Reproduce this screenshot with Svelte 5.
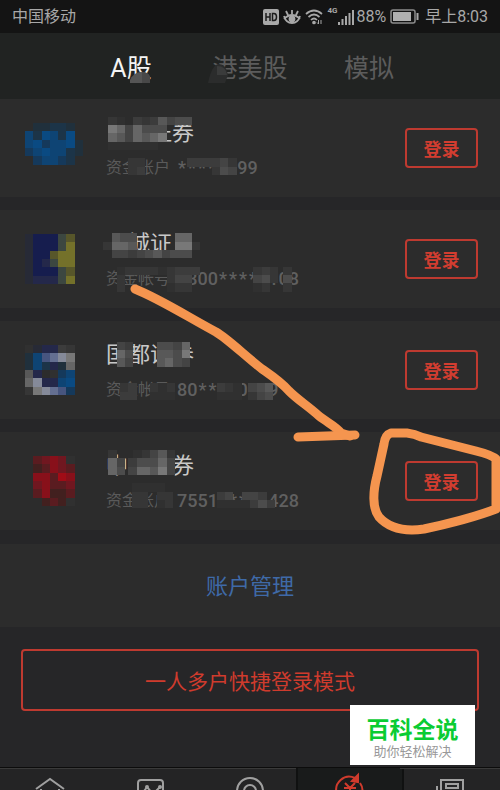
<script lang="ts">
  type Patch = { x: number; y: number; rows: string[] };

  const tabs = ['A股', '港美股', '模拟'];
  let activeTab = 'A股';

  // оттенки мозаики
  const shades: Record<string, string> = {
    a: '#303030',
    b: '#363636',
    c: '#3c3c3c',
    d: '#444444',
    e: '#4c4c4c',
    f: '#585858',
    g: '#666666',
    h: '#787878',
    1: '#20303c',
    2: '#1c3448',
    3: '#15395b',
    4: '#0e4474',
    5: '#0a4a82',
    n: '#161d4e',
    m: '#24284a',
    k: '#272a36',
    t: '#3c4740',
    y: '#74712a',
    o: '#57562a',
    p: '#39392e',
    l: '#47557f',
    v: '#646f91',
    w: '#858a99',
    r: '#88101a',
    s: '#701720',
    u: '#5a1c20',
    x: '#42201f',
    z: '#a00c16',
  };

  const accounts = [
    {
      name: '　　证券',
      label: '资金账户',
      head: '',
      stars: 5,
      tail: '699',
      logo: ['.11221.', '425425.', '4534451', '3454421', '.34432.', '.......'],
    },
    {
      name: '　城证　',
      label: '资金帐号',
      head: '0800',
      stars: 4,
      tail: '0108',
      logo: ['knnnto.', 'knnnty.', 'knnoyy.', 'knmtyy.', 'knnnto.', 'kmmmty.'],
    },
    {
      name: '国都证券',
      label: '资金帐号',
      head: '80',
      stars: 4,
      tail: '0009',
      logo: ['akmmcb.', '14lvwh.', '142m1g.', 'fm.a34.', 'gwmm45.', 'bhwvl3.'],
    },
    {
      name: '中　　券',
      label: '资金账户',
      head: '7551',
      stars: 4,
      tail: '4428',
      logo: ['.usrsa.', '.xursu.', '.rruzr.', '.sruus.', '.urxxu.', '..xuxa.'],
    },
  ];

  const patches: Patch[] = [
    { x: 13, y: 14, rows: ['ba.cbcfdee', 'hgdgeee', 'gfdgfgh', 'aaaaaa'] },
    { x: 15.4, y: 19, rows: ['bb', 'bc'] },
    { x: 22.4, y: 19, rows: ['ccccdb', '...bed'] },
    { x: 12.4, y: 28, rows: ['.fee', 'bggf', '.ddcdefdee'] },
    { x: 21, y: 28, rows: ['gg', 'hhb', 'ee'] },
    { x: 14, y: 32, rows: ['abbbba', 'b', 'b'] },
    { x: 20, y: 32, rows: ['bccc', 'bdd', 'abb'] },
    { x: 30.4, y: 32, rows: ['bcb', 'deb', 'ab'] },
    { x: 34, y: 32, rows: ['b', 'e', 'b'] },
    { x: 14, y: 41, rows: ['dc', 'ge', 'fd'] },
    { x: 18.8, y: 41, rows: ['eedg', 'ffeh', 'fged'] },
    { x: 14.4, y: 46, rows: ['bc', 'cc'] },
    { x: 18, y: 46, rows: ['bab', 'aaa'] },
    { x: 26, y: 46, rows: ['cba', 'aaa'] },
    { x: 29.8, y: 46, rows: ['def', 'bde'] },
    { x: 13, y: 54, rows: ['b..abdfb', 'gd.eeegd', 'ge.ggfhd'] },
    { x: 15.4, y: 55, rows: ['c', 'd'] },
    { x: 15.8, y: 58, rows: ['aaaa', 'bb', 'bb'] },
    { x: 18.8, y: 59, rows: ['bb', 'ab'] },
    { x: 26, y: 59, rows: ['cd.ddc', 'aaaacec'] },
  ];
</script>

<div class="screen">
  <header class="status">
    <span>中国移动</span>
    <div class="status-right">
      <svg width="16" height="16" viewBox="0 0 16 16">
        <rect width="16" height="16" rx="2" fill="#a8a8a8" />
        <path d="M3 4V12M7 4V12M3 8H7M9.5 4.5V11.5H11Q13.5 11.5 13.5 8T11 4.5Z" fill="none" stroke="#1c1c1c" stroke-width="1.5" />
      </svg>
      <svg class="eye" width="18" height="16" viewBox="0 0 18 16" fill="none" stroke="#a8a8a8" stroke-width="1.8">
        <path d="M1 7Q3 14 9 14Q15 14 17 7M1 10Q5 6 9 6Q13 6 17 10M9 5V1M5 6L3 2M13 6L15 2" />
        <circle cx="9" cy="10" r="2.5" fill="#a8a8a8" />
      </svg>
      <svg class="wifi" width="18" height="16" viewBox="0 0 18 16" fill="none" stroke="#a8a8a8" stroke-width="1.7">
        <path d="M1 5Q9 -2 17 5M3.5 8Q9 3 14.5 8M6 11Q9 8 12 11" />
        <circle cx="9" cy="13.5" r="1" fill="#a8a8a8" />
        <path d="M13.5 11V15M12 13.5L13.5 15M16 15V11" stroke-width="1" />
      </svg>
      <span class="net">4G</span>
      <svg width="17" height="16" viewBox="0 0 17 16" stroke="#a8a8a8" stroke-width="2">
        <path d="M2 13V16M5.5 10V16M9 7V16M12.5 4V16M16 1V16" />
      </svg>
      <span class="percent">88%</span>
      <svg class="battery" width="29" height="15" viewBox="0 0 29 15">
        <rect x="1" y="1" width="24" height="13" rx="2" fill="none" stroke="#8c8c8c" stroke-width="1.5" />
        <rect x="3" y="3" width="18" height="9" fill="#b0b0b0" />
        <path d="M27.5 4V11" stroke="#a8a8a8" stroke-width="2" />
      </svg>
      <span>早上8:03</span>
    </div>
  </header>

  <nav class="tabs">
    {#each tabs as tab}
      <button class="tab" class:active={tab === activeTab} on:click={() => (activeTab = tab)}>{tab}</button>
    {/each}
  </nav>

  <main>
    <div class="accounts">
      {#each accounts as account}
        <section class="card">
          <svg class="logo" width="58" height="50" viewBox="0 0 7 6" shape-rendering="crispEdges">
            {#each account.logo as row, y}
              {#each row as cell, x}
                {#if cell !== '.'}
                  <rect {x} {y} width="1" height="1" fill={shades[cell]} />
                {/if}
              {/each}
            {/each}
          </svg>
          <div class="info">
            <h2>{account.name}</h2>
            <p>
              <span>{account.label}</span>
              <span class="number">
                {account.head}{#each Array(account.stars) as _}<span class="star">*</span>{/each}{account.tail}
              </span>
            </p>
          </div>
          <button class="login">登录</button>
        </section>
      {/each}
    </div>

    <a class="manage" href="#manage">账户管理</a>

    <div class="quick">
      <button>一人多户快捷登录模式</button>
    </div>
  </main>

  <nav class="bottom">
    <a href="#home" aria-label="首页">
      <svg width="32" height="32" viewBox="0 0 32 32">
        <path d="M2 12L16 2L30 12M7 12V28H25V12" />
      </svg>
    </a>
    <a href="#market" aria-label="行情">
      <svg width="32" height="32" viewBox="0 0 32 32">
        <rect x="4" y="3" width="25" height="25" rx="3" />
        <path d="M8 17L13 10L19 17L26 10" />
        <circle cx="13" cy="10" r="1" />
        <circle cx="26" cy="10" r="1" />
      </svg>
    </a>
    <a href="#discover" aria-label="发现">
      <svg width="32" height="32" viewBox="0 0 32 32">
        <circle cx="16" cy="14" r="13" />
        <circle cx="16" cy="14" r="6" />
      </svg>
    </a>
    <a class="current" href="#trade" aria-label="交易">
      <svg width="32" height="32" viewBox="0 0 32 32">
        <path d="M3 18A13 13 0 0 1 21 2M26 7A13 13 0 0 1 28 18" />
        <path d="M18 5L24 -1V6Z" fill="#cf3b2d" />
        <path d="M11 7L16 12L21 7M10 12H22M16 12V22M10 16H22" />
      </svg>
    </a>
    <a href="#news" aria-label="资讯">
      <svg width="32" height="32" viewBox="0 0 32 32">
        <path d="M7 28V3H29V28ZM3 9V28H29" />
        <rect x="12" y="7" width="12" height="4" />
        <path d="M12 16H24M12 20H24" />
      </svg>
    </a>
  </nav>

  <svg class="marks" width="500" height="790" viewBox="0 0 500 790" aria-hidden="true">
    <path d="M130 80Q134 72 141 72Q148 72 150 77V83H130Z" fill="#555" />
    <path d="M142 72Q149 72 150 77V83H142Z" fill="#484848" />
    <path d="M208 83Q212 64 219 64Q226 64 228 75L225 83Z" fill="#2b2c2c" />
    <path d="M217 66Q226 66 227 75H217Z" fill="#3a3b3b" />
    <g transform="scale(8.3333)" shape-rendering="crispEdges">
      {#each patches as patch}
        {#each patch.rows as row, y}
          {#each row as cell, x}
            {#if cell !== '.'}
              <rect x={patch.x + x} y={patch.y + y} width="1" height="1" fill={shades[cell]} />
            {/if}
          {/each}
        {/each}
      {/each}
    </g>
    <g class="pen">
      <path d="M135 289C160 299 188 317 216 332C228 339 244 355 262 369C272 376 280 381 289 391C298 400 308 406 319 416C328 423 337 427 341 433L350 436" />
      <path d="M298 437L355 435" />
      <path d="M391 433H407Q415 434 421 437L476 451Q492 455 496 459V509C475 517 452 523 424 529C403 532 388 527 379 517C372 508 373 491 377 476L384 444Q385 435 391 433Z" />
    </g>
  </svg>

  <aside class="watermark">
    <strong>百科全说</strong>
    <span>助你轻松解决</span>
  </aside>
</div>

<style>
  :global(body) {
    margin: 0;
    background: #262628;
  }

  .screen {
    position: relative;
    height: 100vh;
    overflow: hidden;
    background: #262628;
    color: #a8a8a8;
    font-family: Roboto, 'Noto Sans CJK SC', sans-serif;
  }

  button {
    padding: 0;
    border: 0;
    background: none;
    font-family: inherit;
    cursor: pointer;
  }

  .status {
    display: flex;
    justify-content: space-between;
    align-items: center;
    height: 33px;
    padding: 0 12px;
    background: #141414;
    font-size: 16px;
    line-height: 35px;
  }

  .status-right {
    display: flex;
    align-items: center;
  }

  .eye,
  .wifi {
    margin-left: 4px;
  }

  .net {
    align-self: flex-start;
    margin-left: 4px;
    font-size: 8px;
    font-weight: 700;
    line-height: 24px;
  }

  .percent {
    margin-left: 2px;
  }

  .battery {
    margin: 0 6px 0 4px;
  }

  .tabs {
    display: grid;
    grid-template-columns: repeat(3, 119px);
    justify-content: center;
    height: 66px;
    background: #212322;
  }

  .tab {
    color: #5c5c5c;
    font-size: 25px;
  }

  .tab.active {
    color: #f4f4f4;
  }

  .accounts {
    display: grid;
    gap: 13px;
  }

  .card {
    display: flex;
    align-items: center;
    height: 98px;
    padding: 0 22px 0 25px;
    background: #2c2c2c;
  }

  .info {
    flex: 1;
    margin-left: 23px;
    padding-top: 4px;
  }

  h2 {
    margin: 0;
    color: #c8c8c8;
    font-size: 22px;
    font-weight: 400;
    line-height: 36px;
    white-space: pre;
  }

  p {
    display: flex;
    gap: 7px;
    margin: 0;
    color: #5a5a5a;
    font-size: 16px;
    line-height: 34px;
  }

  .number {
    color: #606060;
    font-size: 18px;
    font-weight: 500;
  }

  .star {
    display: inline-block;
    width: 10px;
    text-align: center;
  }

  .login {
    width: 73px;
    height: 40px;
    border: 2px solid #be3a30;
    border-radius: 4px;
    color: #d23d30;
    font-size: 18px;
    font-weight: 700;
  }

  .manage {
    display: block;
    margin-top: 14px;
    padding-top: 3px;
    background: #2c2c2c;
    color: #3f6aa8;
    font-size: 22px;
    line-height: 80px;
    text-align: center;
    text-decoration: none;
  }

  .quick {
    padding: 22px 21px 56px;
  }

  .quick button {
    width: 100%;
    height: 62px;
    border: 2px solid #be3a30;
    border-radius: 4px;
    color: #cf3b2d;
    font-size: 21px;
  }

  .bottom {
    display: grid;
    grid-template-columns: repeat(5, 1fr);
    height: 56px;
    border-top: 1px solid #0c0c0c;
    background: #242425;
  }

  .bottom a {
    display: flex;
    justify-content: center;
    padding-top: 8px;
    border-top: 1px solid #3a3a3a;
  }

  .bottom svg {
    overflow: visible;
    fill: none;
    stroke: #a0a0a0;
    stroke-width: 2;
  }

  .bottom .current {
    margin: 0 -4px;
    border: 1px solid #101111;
    border-width: 0 2px;
    background: #191b1b;
  }

  .bottom .current svg {
    stroke: #cf3b2d;
  }

  .marks {
    position: absolute;
    top: 0;
    left: 0;
    pointer-events: none;
  }

  .pen {
    fill: none;
    stroke: #f5954f;
    stroke-width: 9;
    stroke-linecap: round;
    stroke-linejoin: round;
  }

  .watermark {
    position: absolute;
    top: 705px;
    right: 25px;
    box-sizing: border-box;
    width: 125px;
    height: 60px;
    padding: 14px 0 0;
    background: #fff;
    text-align: center;
  }

  .watermark strong,
  .watermark span {
    display: block;
  }

  .watermark strong {
    color: #0acc33;
    font-size: 23px;
    line-height: 24px;
  }

  .watermark span {
    color: #999;
    font-size: 13px;
    line-height: 18px;
  }
</style>
